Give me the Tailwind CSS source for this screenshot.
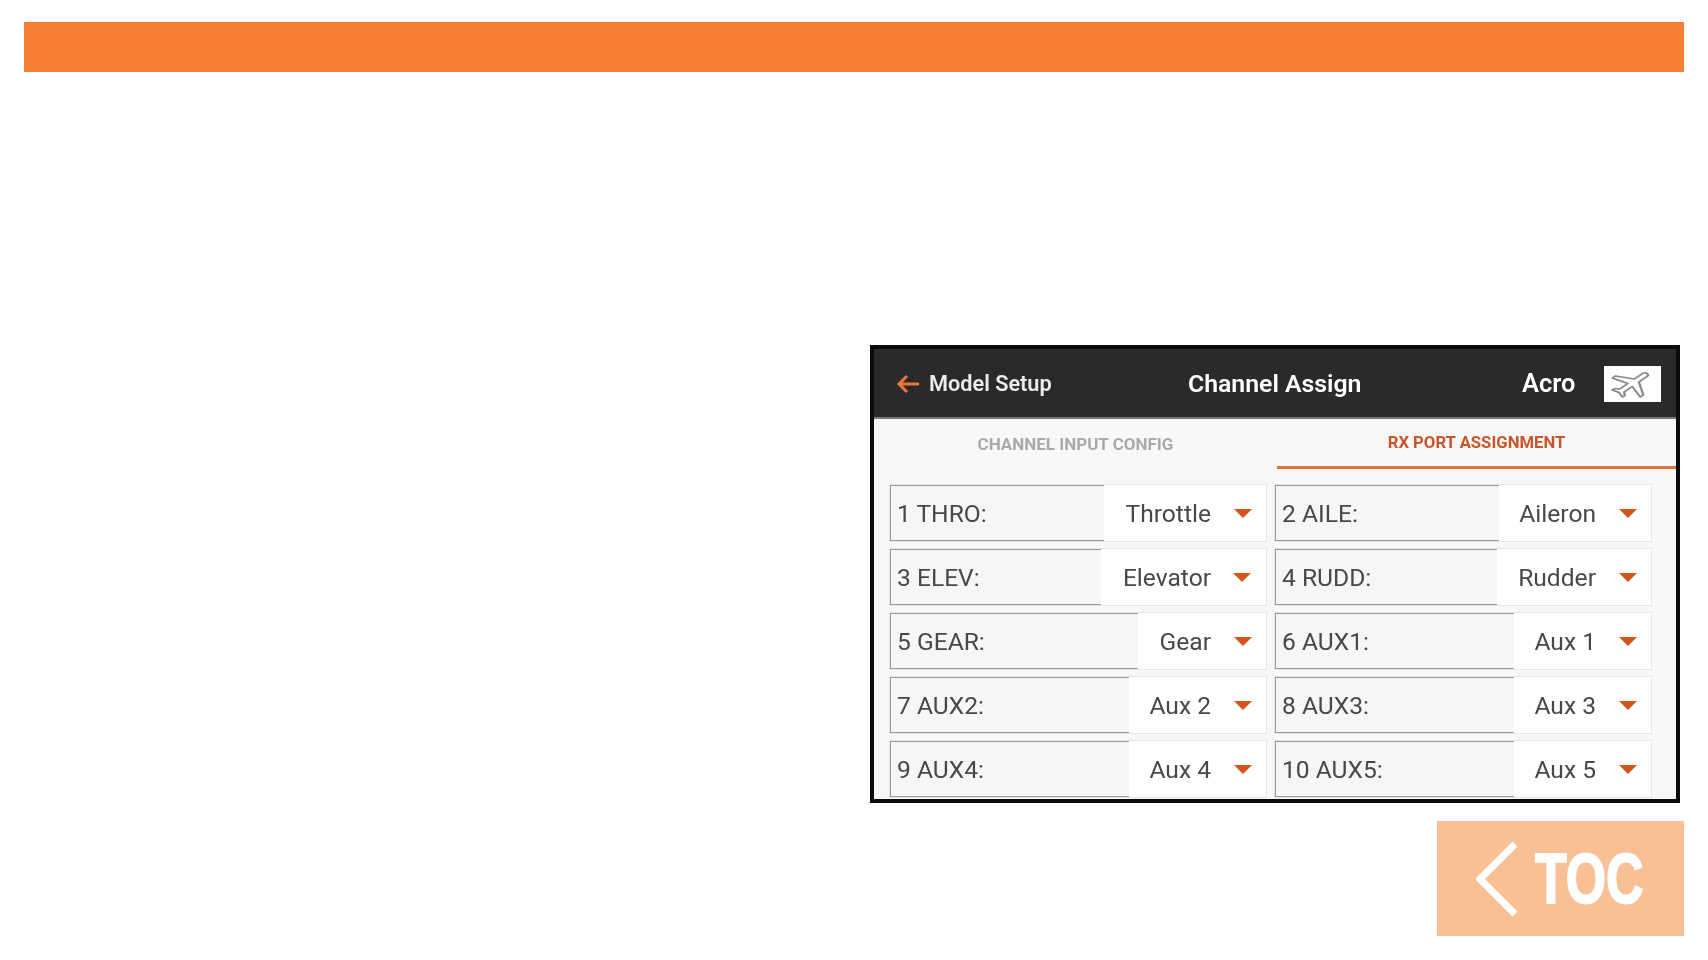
<!DOCTYPE html>
<html>
<head>
	<title>Channel Assign</title>
	<script src="https://cdn.jsdelivr.net/npm/@tailwindcss/browser@4"></script>
</head>
<body class="bg-white">
	<div class="h-[960px] overflow-hidden flex flex-col items-end pt-[22px] font-['Roboto',sans-serif]">
		<div class="w-[1660px] h-[50px] mr-[24px] bg-[#f57f32]"></div>

		<!-- radio screen -->
		<div class="w-[810px] h-[458px] mt-[273px] mr-[28px] border-[4px] border-[#0b0b0b] bg-[#f8f8f8] overflow-hidden blur-[0.6px]">
			<div class="h-[70px] bg-[#2a2a2a] border-b-2 border-[#777] flex items-center text-white">
				<svg class="w-[24px] h-[20px] ml-[22px] mt-[2px]" viewBox="0 0 24 20" fill="none" stroke="#e8793a" stroke-width="3">
					<path d="M23 10H3M11 2l-8 8 8 8"/>
				</svg>
				<span class="ml-[9px] pt-[2px] w-[134px] text-[21.7px] leading-none font-semibold text-[#ececec] whitespace-nowrap">Model Setup</span>
				<span class="ml-[125px] pt-[2px] w-[334px] text-[24.8px] leading-none font-semibold whitespace-nowrap">Channel Assign</span>
				<span class="w-[82px] pt-[2px] text-[25.4px] leading-none font-semibold whitespace-nowrap">Acro</span>
				<div class="w-[57px] h-[36px] mt-[1px] bg-white flex items-center justify-center">
					<svg class="w-[50px] h-[34px]" viewBox="0 0 24 24" preserveAspectRatio="none" fill="#fff" stroke="#8a8a8a" stroke-width="1.1" stroke-linejoin="round">
						<path transform="rotate(45 12 12)" d="M21 16v-2l-8-5V3.5c0-.83-.67-1.5-1.5-1.5S10 2.67 10 3.5V9l-8 5v2l8-2.5V19l-2 1.5V22l3.5-1 3.5 1v-1.5L13 19v-5.5l8 2.5z"/>
					</svg>
				</div>
			</div>

			<div class="h-[50px] flex">
				<div class="w-[403px] flex items-center justify-center pt-[2px] text-[17px] font-bold text-[#aaa] whitespace-nowrap">CHANNEL INPUT CONFIG</div>
				<div class="flex-1 border-b-[3px] border-[#d8763c] flex items-center justify-center text-[16.7px] font-bold text-[#c9552a] whitespace-nowrap">RX PORT ASSIGNMENT</div>
			</div>

			<div class="grid grid-cols-[378px_378px] gap-x-[7px] gap-y-[6px] pl-[15px] pt-[15px] text-[24.6px] leading-none text-[#484848]">
				<div class="h-[58px] flex bg-white border border-[#e6e6e6]">
					<div class="w-[214px] bg-[#f6f6f6] border border-r-0 border-[#999] pl-[6px] pt-[2px] flex items-center">1 THRO:</div>
					<div class="flex-1 flex items-center justify-end pr-[14px] pt-[2px]">Throttle<i class="ml-[23px] -mt-[2px] border-x-[9px] border-x-transparent border-t-[9px] border-t-[#d2541b]"></i></div>
				</div>
				<div class="h-[58px] flex bg-white border border-[#e6e6e6]">
					<div class="w-[224px] bg-[#f6f6f6] border border-r-0 border-[#999] pl-[6px] pt-[2px] flex items-center">2 AILE:</div>
					<div class="flex-1 flex items-center justify-end pr-[14px] pt-[2px]">Aileron<i class="ml-[23px] -mt-[2px] border-x-[9px] border-x-transparent border-t-[9px] border-t-[#d2541b]"></i></div>
				</div>
				<div class="h-[58px] flex bg-white border border-[#e6e6e6]">
					<div class="w-[211px] bg-[#f6f6f6] border border-r-0 border-[#999] pl-[6px] pt-[2px] flex items-center">3 ELEV:</div>
					<div class="flex-1 flex items-center justify-end pr-[15px] pt-[2px]">Elevator<i class="ml-[22px] -mt-[2px] border-x-[9px] border-x-transparent border-t-[9px] border-t-[#d2541b]"></i></div>
				</div>
				<div class="h-[58px] flex bg-white border border-[#e6e6e6]">
					<div class="w-[222px] bg-[#f6f6f6] border border-r-0 border-[#999] pl-[6px] pt-[2px] flex items-center">4 RUDD:</div>
					<div class="flex-1 flex items-center justify-end pr-[14px] pt-[2px]">Rudder<i class="ml-[23px] -mt-[2px] border-x-[9px] border-x-transparent border-t-[9px] border-t-[#d2541b]"></i></div>
				</div>
				<div class="h-[58px] flex bg-white border border-[#e6e6e6]">
					<div class="w-[248px] bg-[#f6f6f6] border border-r-0 border-[#999] pl-[6px] pt-[2px] flex items-center">5 GEAR:</div>
					<div class="flex-1 flex items-center justify-end pr-[14px] pt-[2px]">Gear<i class="ml-[23px] -mt-[2px] border-x-[9px] border-x-transparent border-t-[9px] border-t-[#d2541b]"></i></div>
				</div>
				<div class="h-[58px] flex bg-white border border-[#e6e6e6]">
					<div class="w-[239px] bg-[#f6f6f6] border border-r-0 border-[#999] pl-[6px] pt-[2px] flex items-center">6 AUX1:</div>
					<div class="flex-1 flex items-center justify-end pr-[14px] pt-[2px]">Aux 1<i class="ml-[23px] -mt-[2px] border-x-[9px] border-x-transparent border-t-[9px] border-t-[#d2541b]"></i></div>
				</div>
				<div class="h-[58px] flex bg-white border border-[#e6e6e6]">
					<div class="w-[239px] bg-[#f6f6f6] border border-r-0 border-[#999] pl-[6px] pt-[2px] flex items-center">7 AUX2:</div>
					<div class="flex-1 flex items-center justify-end pr-[14px] pt-[2px]">Aux 2<i class="ml-[23px] -mt-[2px] border-x-[9px] border-x-transparent border-t-[9px] border-t-[#d2541b]"></i></div>
				</div>
				<div class="h-[58px] flex bg-white border border-[#e6e6e6]">
					<div class="w-[239px] bg-[#f6f6f6] border border-r-0 border-[#999] pl-[6px] pt-[2px] flex items-center">8 AUX3:</div>
					<div class="flex-1 flex items-center justify-end pr-[14px] pt-[2px]">Aux 3<i class="ml-[23px] -mt-[2px] border-x-[9px] border-x-transparent border-t-[9px] border-t-[#d2541b]"></i></div>
				</div>
				<div class="h-[58px] flex bg-white border border-[#e6e6e6]">
					<div class="w-[239px] bg-[#f6f6f6] border border-r-0 border-[#999] pl-[6px] pt-[2px] flex items-center">9 AUX4:</div>
					<div class="flex-1 flex items-center justify-end pr-[14px] pt-[2px]">Aux 4<i class="ml-[23px] -mt-[2px] border-x-[9px] border-x-transparent border-t-[9px] border-t-[#d2541b]"></i></div>
				</div>
				<div class="h-[58px] flex bg-white border border-[#e6e6e6]">
					<div class="w-[239px] bg-[#f6f6f6] border border-r-0 border-[#999] pl-[6px] pt-[2px] flex items-center">10 AUX5:</div>
					<div class="flex-1 flex items-center justify-end pr-[14px] pt-[2px]">Aux 5<i class="ml-[23px] -mt-[2px] border-x-[9px] border-x-transparent border-t-[9px] border-t-[#d2541b]"></i></div>
				</div>
			</div>
		</div>

		<!-- back to contents -->
		<div class="w-[247px] h-[115px] mt-[18px] mr-[24px] bg-[#f9bf95] flex items-center text-white">
			<svg class="w-[42px] h-[76px] ml-[39px]" viewBox="0 0 42 76" fill="none" stroke="#fff" stroke-width="7">
				<path d="M39 3L4 38l35 35"/>
			</svg>
			<span class="ml-[17px] mt-[1px] text-[70px] leading-none font-bold font-['Liberation_Sans',sans-serif] [-webkit-text-stroke:2px_white] scale-x-[0.74] origin-left">TOC</span>
		</div>
	</div>
</body>
</html>
